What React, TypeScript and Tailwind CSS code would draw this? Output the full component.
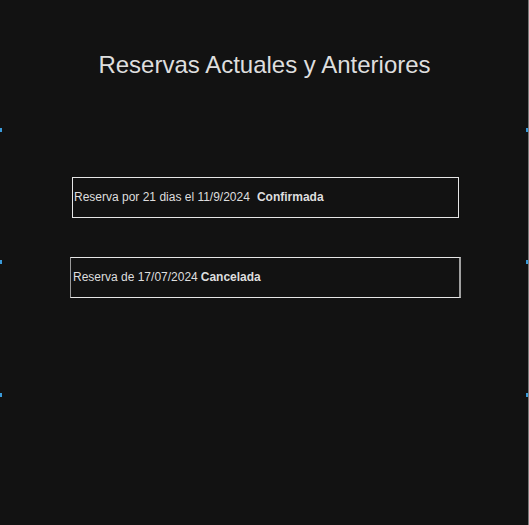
const reservas = [
  { id: 1, text: 'Reserva por 21 dias el 11/9/2024', estado: 'Confirmada' },
  { id: 2, text: 'Reserva de 17/07/2024', estado: 'Cancelada' },
];

const marks = [128, 260, 393];

export default function App() {
  return (
    <div className="relative h-[525px] w-full overflow-hidden bg-[#121212] font-['Liberation_Sans',Arial,sans-serif] text-[#dedede]">
      <h1 className="pt-[51px] text-center text-[24px] leading-[28px]">Reservas Actuales y Anteriores</h1>

      <div className="mt-[98px] flex flex-col items-center pl-[2px]">
        <div className="flex h-[41px] w-[387px] items-center border border-[#e6e6e6] pb-[2px] pl-[1px] text-[12px]">
          <span>{reservas[0].text}</span>
          <span className="ml-[7px] font-bold">{reservas[0].estado}</span>
        </div>
        <div className="mt-[39px] flex h-[41px] w-[391px] items-center border-y border-l border-r-2 border-y-[#e6e6e6] border-l-[#9a9a9a] border-r-[#a0a0a0] pb-[2px] pl-[2px] text-[12px]">
          <span>{reservas[1].text}</span>
          <span className="ml-[3px] font-bold">{reservas[1].estado}</span>
        </div>
      </div>

      {marks.map((y) => (
        <span key={'l' + y} className="absolute left-0 h-[4px] w-[2px] bg-[#3a9ad9]" style={{ top: y }} />
      ))}
      {marks.map((y) => (
        <span key={'r' + y} className="absolute right-[1px] h-[4px] w-[2px] bg-[#3a9ad9]" style={{ top: y }} />
      ))}
      <div className="absolute right-0 top-0 h-full w-[1px] bg-[#7a7a7a]" />
    </div>
  );
}
